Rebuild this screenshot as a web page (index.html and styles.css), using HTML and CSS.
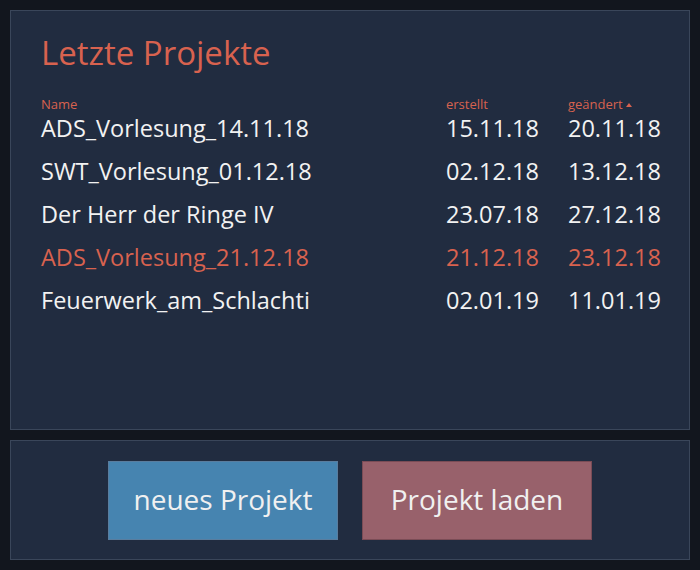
FILE: index.html
```html
<!DOCTYPE html>
<html lang="de">
<head>
<meta charset="utf-8">
<link rel="stylesheet" href="styles.css">
</head>
<body>
<section class="panel projects">
  <h1 class="title">Letzte Projekte</h1>
  <div class="table">
    <div class="row head">
      <span class="c-name">Name</span>
      <span class="c-date">erstellt</span>
      <span class="c-date">geändert<span class="caret"></span></span>
    </div>
    <div class="row">
      <span class="c-name">ADS_Vorlesung_14.11.18</span>
      <span class="c-date">15.11.18</span>
      <span class="c-date">20.11.18</span>
    </div>
    <div class="row">
      <span class="c-name">SWT_Vorlesung_01.12.18</span>
      <span class="c-date">02.12.18</span>
      <span class="c-date">13.12.18</span>
    </div>
    <div class="row">
      <span class="c-name">Der Herr der Ringe IV</span>
      <span class="c-date">23.07.18</span>
      <span class="c-date">27.12.18</span>
    </div>
    <div class="row active">
      <span class="c-name">ADS_Vorlesung_21.12.18</span>
      <span class="c-date">21.12.18</span>
      <span class="c-date">23.12.18</span>
    </div>
    <div class="row">
      <span class="c-name">Feuerwerk_am_Schlachti</span>
      <span class="c-date">02.01.19</span>
      <span class="c-date">11.01.19</span>
    </div>
  </div>
</section>
<section class="panel actions">
  <button class="btn btn-new">neues Projekt</button>
  <button class="btn btn-load">Projekt laden</button>
</section>
</body>
</html>
```
FILE: styles.css
```css
* { box-sizing: border-box; }
html, body { margin: 0; }
body {
  width: 700px;
  height: 570px;
  padding: 10px;
  background: #12161e;
  font-family: "Open Sans", "Noto Sans", sans-serif;
  display: flex;
  flex-direction: column;
  gap: 10px;
  overflow: hidden;
}
.panel {
  background: #212c40;
  border: 1px solid #3a465a;
}
.projects {
  height: 420px;
  padding: 22px 30px 0 30px;
}
.title {
  margin: 0;
  font-weight: 400;
  font-size: 33px;
  line-height: 40px;
  color: #d8624f;
}
.table {
  margin-top: 25px;
  display: flex;
  flex-direction: column;
  gap: 11px;
}
.row {
  display: grid;
  grid-template-columns: 405px 122px 1fr;
  color: #f2f2f2;
  font-size: 23.5px;
  line-height: 32px;
}
.row.head {
  font-size: 13px;
  line-height: 12px;
  color: #d8624f;
  margin-bottom: -9px;
}
.row.active { color: #d8624f; }
.caret {
  display: inline-block;
  width: 0; height: 0;
  margin-left: 3px;
  vertical-align: 2px;
  border-left: 3.5px solid transparent;
  border-right: 3.5px solid transparent;
  border-bottom: 4px solid #d8624f;
}
.actions {
  height: 120px;
  display: flex;
  justify-content: center;
  align-items: center;
  gap: 24px;
}
.btn {
  width: 230px;
  height: 79px;
  font-family: inherit;
  font-size: 28px;
  color: #f0f0f0;
  border: 1px solid;
  padding: 0 0 2px 0;
}
.btn-new { background: #4684b0; border-color: #5a7d9e; }
.btn-load { background: #98616b; border-color: #7a4c56; }
```
